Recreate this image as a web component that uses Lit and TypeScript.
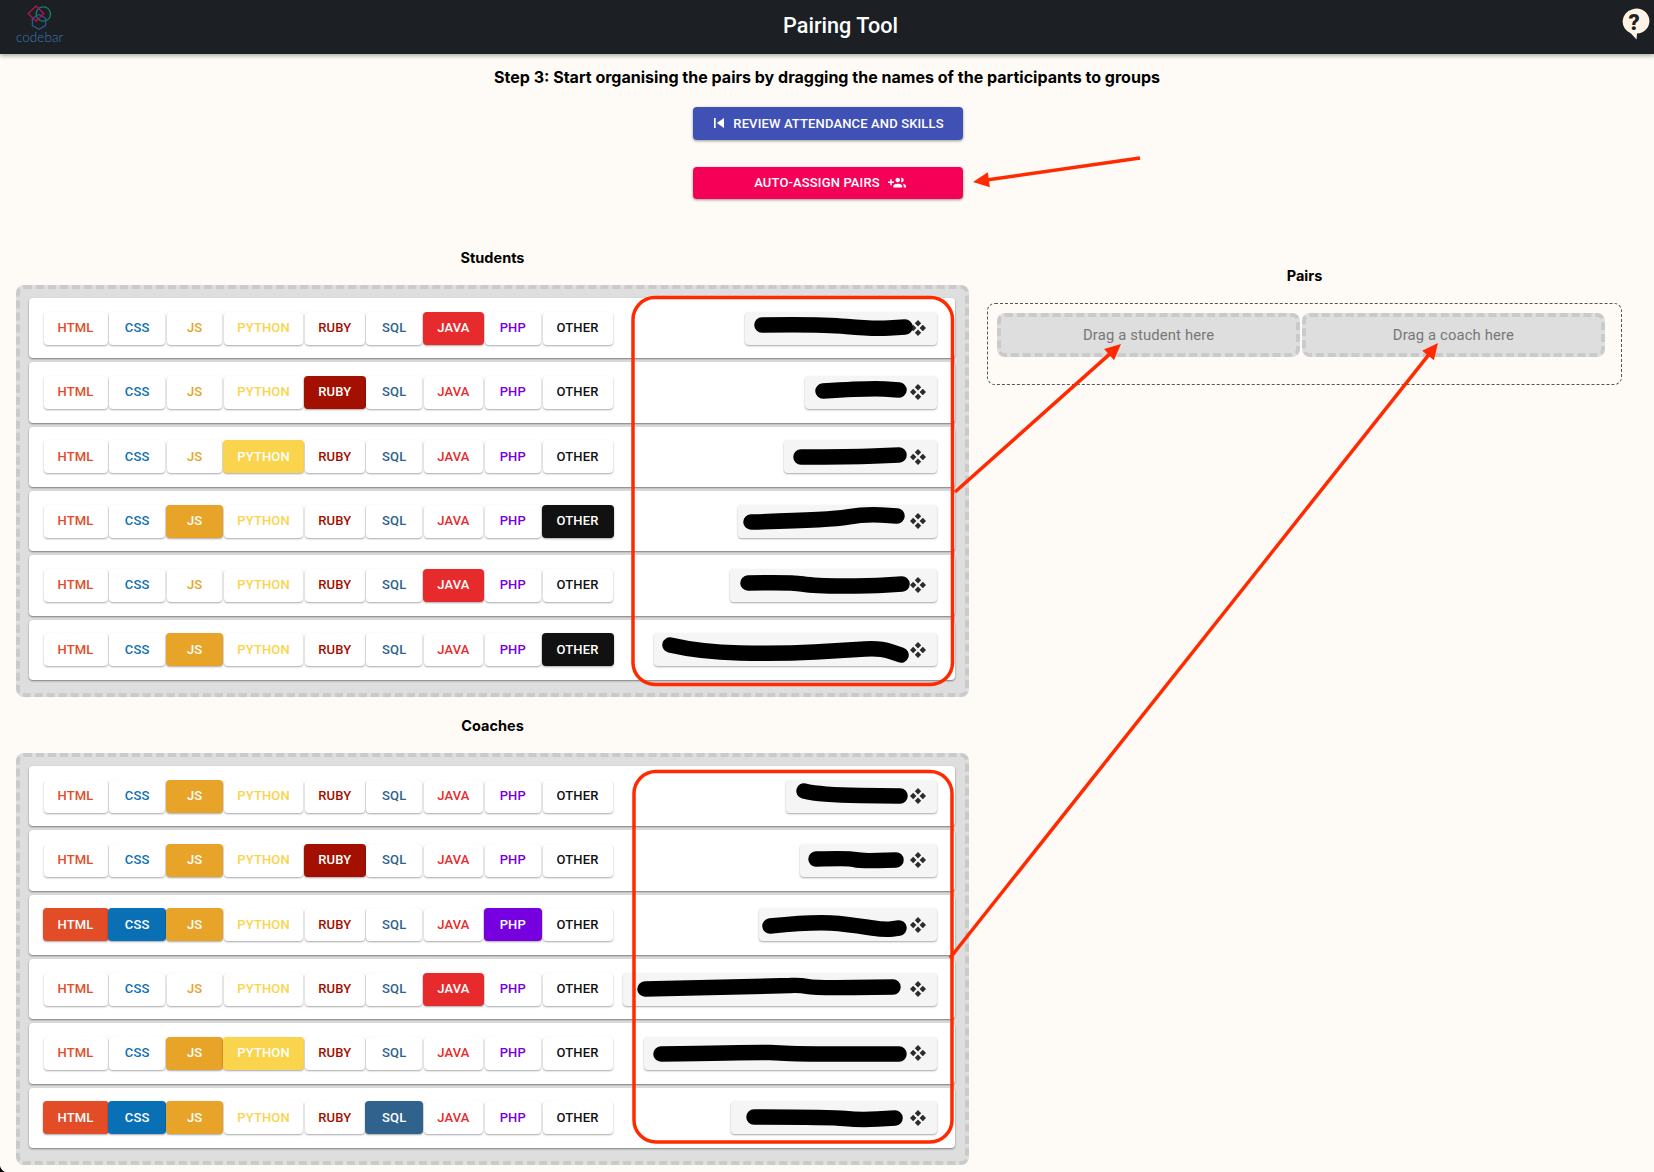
import { LitElement, html, css, svg } from 'lit';
import { customElement } from 'lit/decorators.js';

type Skill = { name: string; color: string; width: number };
type Person = { chip: number; on: string[] };
type Point = [number, number];

const SKILLS: Skill[] = [
  { name: 'HTML', color: '#e24d28', width: 64 },
  { name: 'CSS', color: '#0a70b5', width: 56 },
  { name: 'JS', color: '#e8a329', width: 55.5 },
  { name: 'PYTHON', color: '#fad44c', width: 79 },
  { name: 'RUBY', color: '#a31000', width: 60 },
  { name: 'SQL', color: '#2f638e', width: 55.5 },
  { name: 'JAVA', color: '#e72b2d', width: 59.5 },
  { name: 'PHP', color: '#7700e0', width: 56 },
  { name: 'OTHER', color: '#111111', width: 70 },
];

const STUDENTS: Person[] = [
  { chip: 192, on: ['JAVA'] },
  { chip: 132, on: ['RUBY'] },
  { chip: 153, on: ['PYTHON'] },
  { chip: 199, on: ['JS', 'OTHER'] },
  { chip: 207, on: ['JAVA'] },
  { chip: 283, on: ['JS', 'OTHER'] },
];

const COACHES: Person[] = [
  { chip: 151, on: ['JS'] },
  { chip: 137, on: ['JS', 'RUBY'] },
  { chip: 178, on: ['HTML', 'CSS', 'JS', 'PHP'] },
  { chip: 314, on: ['JAVA'] },
  { chip: 293, on: ['JS', 'PYTHON'] },
  { chip: 206, on: ['HTML', 'CSS', 'JS', 'SQL'] },
];

// black marker strokes hiding the names
const SCRIBBLES: Point[][] = [
  [[762, 325], [820, 324], [873, 329], [905, 327]],
  [[823, 391], [870, 388], [899, 390]],
  [[801, 457], [850, 457], [899, 455]],
  [[751, 522], [830, 520], [865, 514], [897, 516]],
  [[748, 583], [790, 582], [815, 586], [870, 586], [902, 584]],
  [[670, 645], [700, 652], [780, 654], [850, 650], [880, 648], [901, 655]],
  [[804, 791], [820, 795], [900, 796]],
  [[816, 859], [850, 858], [860, 861], [896, 860]],
  [[770, 926], [817, 921], [860, 926], [885, 930], [899, 928]],
  [[645, 989], [780, 986], [800, 985], [815, 988], [893, 987]],
  [[661, 1054], [760, 1052], [780, 1053], [800, 1054], [899, 1054]],
  [[754, 1117], [830, 1117], [860, 1120], [895, 1118]],
];

const ARROWS: [Point, Point][] = [
  [[1140, 158], [973, 182]],
  [[955, 492], [1121, 344]],
  [[950, 958], [1438, 343]],
];

function smooth(points: Point[]): string {
  let d = `M${points[0][0]} ${points[0][1]}`;
  for (let i = 1; i < points.length - 1; i++) {
    const mx = (points[i][0] + points[i + 1][0]) / 2;
    const my = (points[i][1] + points[i + 1][1]) / 2;
    d += ` Q${points[i][0]} ${points[i][1]} ${mx} ${my}`;
  }
  const last = points[points.length - 1];
  return `${d} L${last[0]} ${last[1]}`;
}

function arrow([from, to]: [Point, Point]) {
  const angle = Math.atan2(to[1] - from[1], to[0] - from[0]);
  const at = (len: number, side: number): string => {
    const x = to[0] - len * Math.cos(angle) - side * Math.sin(angle);
    const y = to[1] - len * Math.sin(angle) + side * Math.cos(angle);
    return `${x},${y}`;
  };
  return svg`
    <line x1=${from[0]} y1=${from[1]} x2=${to[0] - 10 * Math.cos(angle)} y2=${to[1] - 10 * Math.sin(angle)}
      stroke="#ff2a00" stroke-width="3.5"></line>
    <polygon fill="#ff2a00" points="${to[0]},${to[1]} ${at(16, 7.5)} ${at(16, -7.5)}"></polygon>
  `;
}

const dragIcon = html`
  <svg class="drag" viewBox="0 0 16 16" width="16" height="16" fill="#2b2b2b">
    <path d="M8 0l3.200 3.200L8 6.400 4.800 3.200zM8 16l-3.200-3.200L8 9.600l3.200 3.200zM0 8l3.200-3.200L6.400 8l-3.200 3.200zM16 8l-3.200 3.200L9.600 8l3.200-3.200z"></path>
  </svg>
`;

@customElement('app-root')
export class AppRoot extends LitElement {
  static styles = css`
    :host {
      display: block;
      font-family: Roboto, 'Liberation Sans', sans-serif;
    }

    .page {
      position: relative;
      width: 1654px;
      height: 1172px;
      overflow: hidden;
      background: #fefbf6;
      color: #000;
    }

    header {
      height: 54px;
      display: flex;
      align-items: center;
      padding: 0 3px 0 16px;
      background: #1c1f23;
      box-shadow: 0 2px 4px rgba(0, 0, 0, 0.3);
    }

    .logo {
      width: 48px;
      height: 46px;
      flex-shrink: 0;
      overflow: visible;
    }

    h1 {
      flex: 1;
      align-self: flex-start;
      margin: 0;
      padding: 3px 2px 0 0;
      font-size: 21.6px;
      font-weight: 500;
      line-height: 46px;
      text-align: center;
      color: #fff;
    }

    .help {
      width: 32px;
      height: 44px;
      flex-shrink: 0;
      align-self: flex-start;
      margin-top: 1px;
    }

    .intro {
      display: flex;
      flex-direction: column;
      align-items: center;
    }

    h2 {
      margin: 14px 0 21px;
      font-family: Inter, Roboto, sans-serif;
      font-size: 16.05px;
      font-weight: 700;
      line-height: 18px;
    }

    .action {
      box-sizing: border-box;
      display: flex;
      align-items: center;
      justify-content: center;
      width: 270px;
      height: 33px;
      margin-left: 2px;
      padding-bottom: 1px;
      border-radius: 4px;
      font-size: 13px;
      font-weight: 500;
      letter-spacing: 0.14px;
      color: #fff;
      box-shadow: 0 1px 3px rgba(0, 0, 0, 0.4);
    }

    .action svg {
      fill: #fff;
    }

    .review {
      gap: 4px;
      margin-bottom: 27px;
      padding-right: 3px;
      background: #3f51b5;
    }

    .assign {
      gap: 8px;
      height: 32px;
      padding-left: 4px;
      background: #f50057;
    }

    .columns {
      display: flex;
      gap: 18px;
      padding: 50px 32px 0 16px;
    }

    .left {
      width: 953px;
    }

    .right {
      flex: 1;
      padding-top: 18px;
    }

    h3 {
      margin: 0 0 18px;
      font-family: Inter, Roboto, sans-serif;
      font-size: 14.5px;
      font-weight: 700;
      line-height: 18px;
      text-align: center;
    }

    .coaches-title {
      margin-top: 20px;
    }

    .list {
      padding: 9px 10px 9px 9px;
      border: 4px dashed #cacaca;
      border-radius: 8px;
      background: #dedede;
    }

    .row {
      display: flex;
      align-items: center;
      height: 60.33px;
      margin-bottom: 4px;
      padding: 0 18px 0 14.5px;
      border-radius: 4px;
      background: #fff;
      box-shadow: 0 1px 2px rgba(0, 0, 0, 0.45);
    }

    .skills {
      display: flex;
      gap: 1.7px;
    }

    .skill {
      box-sizing: border-box;
      display: flex;
      align-items: center;
      justify-content: center;
      height: 33px;
      padding-bottom: 1px;
      border-radius: 4px;
      background: #fff;
      font-size: 13px;
      font-weight: 500;
      letter-spacing: 0.15px;
      box-shadow: 0 1px 2px rgba(0, 0, 0, 0.35);
    }

    .skill.on {
      margin: 0 -1px;
      padding: 0 1px 1px;
      box-sizing: content-box;
      height: 32px;
      color: #fff !important;
    }

    .chip {
      display: flex;
      align-items: center;
      justify-content: flex-end;
      height: 33px;
      margin-left: auto;
      padding-right: 11px;
      box-sizing: border-box;
      border-radius: 4px;
      background: #f5f5f5;
      box-shadow: 0 1px 2px rgba(0, 0, 0, 0.35);
    }

    .pairs {
      box-sizing: border-box;
      display: flex;
      gap: 1.6px;
      height: 82px;
      padding: 9px 16px 27px 9px;
      border: 1px dashed #555;
      border-radius: 8px;
    }

    .drop {
      flex: 1;
      display: flex;
      align-items: center;
      justify-content: center;
      border: 4px dashed #cacaca;
      border-radius: 8px;
      background: #dedede;
      font-size: 14.8px;
      letter-spacing: 0.15px;
      color: #777;
    }

    .marks {
      position: absolute;
      top: 0;
      left: 0;
      pointer-events: none;
    }
  `;

  private renderPerson(person: Person) {
    return html`
      <div class="row">
        <div class="skills">
          ${SKILLS.map((skill) => {
            const on = person.on.includes(skill.name);
            const style = on
              ? `width:${skill.width}px;background:${skill.color}`
              : `width:${skill.width}px;color:${skill.color}`;
            return html`<div class="skill ${on ? 'on' : ''}" style=${style}>${skill.name}</div>`;
          })}
        </div>
        <div class="chip" style="width:${person.chip}px">${dragIcon}</div>
      </div>
    `;
  }

  render() {
    return html`
      <div class="page">
        <header>
          <svg class="logo" viewBox="0 0 48 46" fill="none">
            <circle cx="27.3" cy="10" r="7.2" stroke="#12866e" stroke-width="1.3"></circle>
            <path d="M23 10.500l6.600 3.800v7.200L23 25.300l-6.600-3.800v-7.200z" stroke="#2b5b8e" stroke-width="1.3"></path>
            <path d="M20 2l7.800 7.500-7.800 7.500-7.800-7.500z" stroke="#ae1650" stroke-width="1.3"></path>
            <text x="0" y="37.5" font-family="Lato, sans-serif" font-size="13.6" font-weight="300" fill="#3a7db5">codebar</text>
          </svg>
          <h1>Pairing Tool</h1>
          <svg class="help" viewBox="0 0 32 44">
            <path d="M13 8.500a12.500 12.500 0 1 1 5 24l-.5 6-5.500-6.100A12.500 12.500 0 0 1 13 8.500z" fill="#fff3e6"></path>
            <text x="15" y="29" text-anchor="middle" font-family="Roboto, sans-serif" font-size="22" font-weight="900" fill="#1c1f23">?</text>
          </svg>
        </header>

        <div class="intro">
          <h2>Step 3: Start organising the pairs by dragging the names of the participants to groups</h2>
          <div class="action review">
            <svg viewBox="0 0 24 24" width="20" height="20"><path d="M6 6h2v12H6zm3.500 6l8.500 6V6z"></path></svg>
            <span>REVIEW ATTENDANCE AND SKILLS</span>
          </div>
          <div class="action assign">
            <span>AUTO-ASSIGN PAIRS</span>
            <svg viewBox="0 0 24 24" width="18" height="18"><path d="M8 10H5V7H3v3H0v2h3v3h2v-3h3v-2zm10 1c1.660 0 2.990-1.340 2.990-3S19.660 5 18 5c-.32 0-.63.05-.91.14.57.81.9 1.790.9 2.860s-.34 2.040-.9 2.860c.28.09.59.14.91.14zm-5 0c1.660 0 2.990-1.340 2.990-3S14.660 5 13 5s-3 1.340-3 3 1.340 3 3 3zm6.620 2.160c.83.73 1.380 1.660 1.380 2.840v2h3v-2c0-1.540-2.370-2.490-4.380-2.840zM13 13c-2 0-6 1-6 3v2h12v-2c0-2-4-3-6-3z"></path></svg>
          </div>
        </div>

        <div class="columns">
          <div class="left">
            <h3>Students</h3>
            <div class="list">${STUDENTS.map((p) => this.renderPerson(p))}</div>
            <h3 class="coaches-title">Coaches</h3>
            <div class="list">${COACHES.map((p) => this.renderPerson(p))}</div>
          </div>
          <div class="right">
            <h3>Pairs</h3>
            <div class="pairs">
              <div class="drop">Drag a student here</div>
              <div class="drop">Drag a coach here</div>
            </div>
          </div>
        </div>

        <svg class="marks" width="1654" height="1172" fill="none">
          ${SCRIBBLES.map((points) => svg`
            <path d=${smooth(points)} stroke="#000" stroke-width="15.5" stroke-linecap="round" stroke-linejoin="round"></path>
          `)}
          <rect x="633" y="297.5" width="319.5" height="387" rx="22" stroke="#ff2a00" stroke-width="3.5"></rect>
          <rect x="634" y="771.5" width="318" height="370.5" rx="22" stroke="#ff2a00" stroke-width="3.5"></rect>
          ${ARROWS.map(arrow)}
          <path d="M0 1166q1 4 5 6H0z" fill="#000"></path>
        </svg>
      </div>
    `;
  }
}
